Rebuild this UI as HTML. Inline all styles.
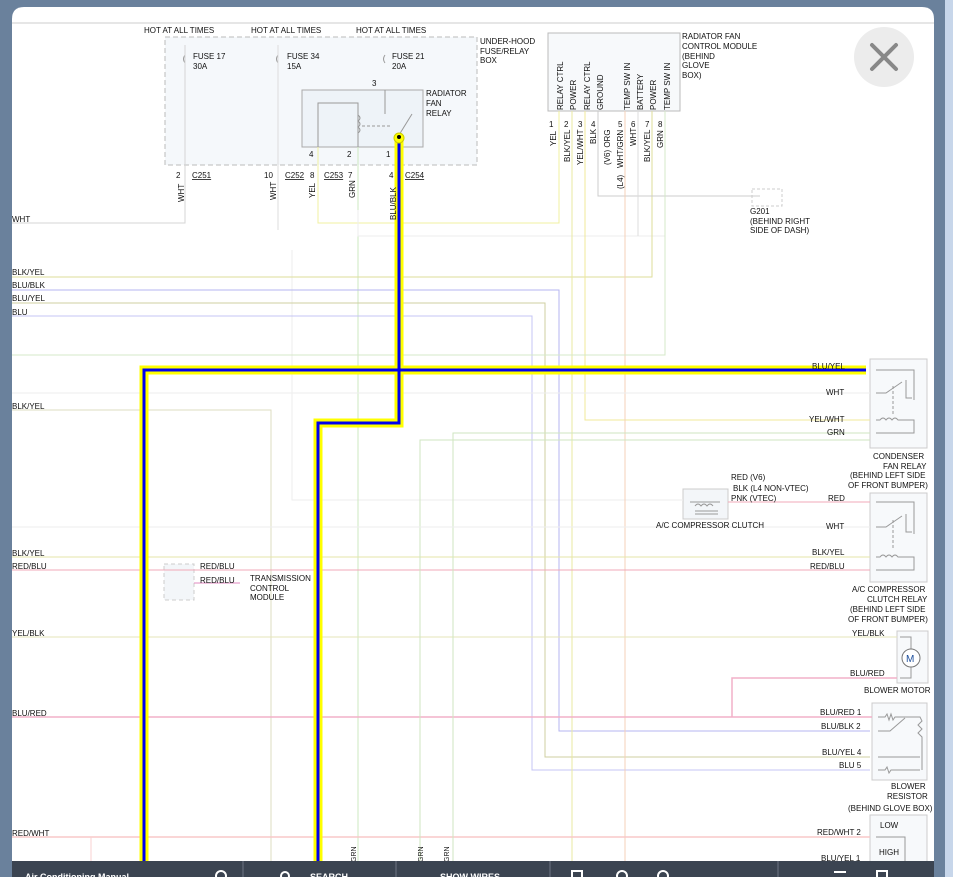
<!DOCTYPE html>
<html><head><meta charset="utf-8"><style>
html,body{margin:0;padding:0;width:953px;height:877px;overflow:hidden;background:#6a819c;}
svg{display:block;font-family:"Liberation Sans",sans-serif;}
</style></head><body>
<svg width="953" height="877" viewBox="0 0 953 877" xmlns="http://www.w3.org/2000/svg">
<rect x="0" y="0" width="953" height="877" fill="#6a819c"/>
<rect x="945" y="0" width="8" height="877" fill="#c7d6ea"/>
<path d="M12 877 V19 Q12 7 24 7 H922 Q934 7 934 19 V877 Z" fill="#fff"/>
<line x1="12" y1="23" x2="934" y2="23" stroke="#ccc" stroke-width="1"/>

<!-- boxes -->
<rect x="165" y="37" width="312" height="128" fill="#f5f8fb" stroke="#bbb" stroke-dasharray="5,3"/>
<rect x="302" y="90" width="121" height="57" fill="#eef3f8" stroke="#aaa"/>
<rect x="548" y="33" width="132" height="78" fill="#f7f9fb" stroke="#bbb"/>
<rect x="870" y="359" width="57" height="89" fill="#f7f9fb" stroke="#ccc"/>
<rect x="870" y="493" width="57" height="89" fill="#f7f9fb" stroke="#ccc"/>
<rect x="897" y="631" width="31" height="52" fill="#f7f9fb" stroke="#ccc"/>
<rect x="872" y="703" width="55" height="77" fill="#f7f9fb" stroke="#ccc"/>
<rect x="870" y="815" width="57" height="50" fill="#f7f9fb" stroke="#ccc"/>
<rect x="683" y="489" width="45" height="30" fill="#f3f6f9" stroke="#ccc"/>
<rect x="164" y="564" width="30" height="36" fill="#f3f6f9" stroke="#ccc" stroke-dasharray="4,3"/>
<rect x="752" y="189" width="30" height="17" fill="none" stroke="#ccc" stroke-dasharray="3,2"/>

<!-- component internals -->
<g fill="none" stroke="#999" stroke-width="1">
<path d="M318 147 V103 H358 V147"/>
<path d="M358 115 q4 3 0 6 q4 3 0 6 q4 3 0 6"/>
<path d="M362 126 H390" stroke-dasharray="3,2"/>
<path d="M385 90 V114"/><path d="M399 135 L412 114"/>
<path d="M185 55 q-3 4 0 8 M278 55 q-3 4 0 8 M385 55 q-3 4 0 8"/>
<path d="M876 393 H886 L902 382 M906 380 V398 H912" /><path d="M893 386 V414" stroke-dasharray="3,2"/>
<path d="M876 370 H914 V400 M876 420 H880 q3 -4 6 0 q3 -4 6 0 q3 -4 6 0 H914 V433 H876"/>
<path d="M876 527 H886 L902 516 M906 514 V532 H912"/><path d="M893 520 V548" stroke-dasharray="3,2"/>
<path d="M876 502 H914 V534 M876 557 H880 q3 -4 6 0 q3 -4 6 0 q3 -4 6 0 H914 V570 H876"/>
<path d="M900 637 H911 V649 M911 667 V678 H900"/>
<path d="M878 717 H885 l2 -3 l2 6 l2 -6 l2 6 l2 -3 H920 l2 4 l-4 4 l4 4 l-4 4 l4 4 V770 M878 731 H890 L905 718 M878 757 H920 M878 770 H885 l2 -3 l2 6 l2 -3 H920"/>
<path d="M876 837 H905 V862"/>
<path d="M690 502 H720 M695 506 q3 -4 6 0 q3 -4 6 0 q3 -4 6 0 M695 511 H718 M695 514 H718"/>
</g>
<circle cx="911" cy="658" r="9" fill="#fff" stroke="#777"/><text x="906" y="662" font-size="10" fill="#1a4c9a" font-family="Liberation Sans">M</text>

<!-- thin wires -->
<g fill="none" stroke-width="1">
<path d="M185 45 V223 H12" stroke="#d5d5d5"/>
<path d="M278 45 V230" stroke="#ddd"/>
<path d="M292 250 V500 H683" stroke="#eee"/>
<path d="M318 147 V223 H559 V111" stroke="#f0f0a0"/>
<path d="M358 147 V862" stroke="#cde8c0"/>
<path d="M358 210 V236 H665 V111" stroke="#eee"/>
<path d="M12 277 H652 V111" stroke="#dede9a"/>
<path d="M12 290 H559 V731 H870" stroke="#b6b6f0"/>
<path d="M12 303 H545 V757 H870" stroke="#cfcfa0"/>
<path d="M12 316 H532 V770 H870" stroke="#c4c4f4"/>
<path d="M572 111 V862" stroke="#eaeaa0"/>
<path d="M585 111 V420 H870" stroke="#f0e89a"/>
<path d="M598 111 V196 H760" stroke="#ccc"/>
<path d="M625 111 V862" stroke="#f5d0b8"/>
<path d="M638 111 V236" stroke="#ddd"/>
<path d="M665 111 V355 H12" stroke="#d5e8c8"/>
<path d="M12 410 H271 V862" stroke="#dedcc0"/>
<path d="M12 557 H870" stroke="#e6e6a8"/>
<path d="M12 570 H870" stroke="#f0a8b8"/>
<path d="M194 583 H240" stroke="#e08ac0"/>
<path d="M12 637 H897" stroke="#e6e6b8"/>
<path d="M12 717 H872 M732 717 V678 H897" stroke="#f2b0c8" stroke-width="1.5"/>
<path d="M12 837 H870" stroke="#f8c8c8" stroke-width="1.5"/>
<path d="M91 837 V862" stroke="#f8d0d0"/>
<path d="M420 862 V440 H870" stroke="#cfe6c0"/>
<path d="M453 862 V433 H870" stroke="#cfe6c0"/>
<path d="M12 393 H870" stroke="#eee"/>
<path d="M12 527 H870" stroke="#eee"/>
<path d="M728 502 H870" stroke="#f2aab8"/>
</g>
<!-- highlighted wire -->
<g fill="none" stroke-linejoin="miter">
<path d="M399 140 V423 H318 V862" stroke="#ffff00" stroke-width="9"/>
<path d="M144 862 V370 H866" stroke="#ffff00" stroke-width="9"/>
<path d="M399 140 V423 H318 V862" stroke="#0000ee" stroke-width="3"/>
<path d="M144 862 V370 H866" stroke="#0000ee" stroke-width="3"/>
</g>
<circle cx="399" cy="138" r="5" fill="#ffff00" stroke="#cc0" stroke-width="1"/><circle cx="399" cy="137" r="2" fill="#000"/>

<g font-size="8" fill="#111">
<text x="144" y="33">HOT AT ALL TIMES</text>
<text x="251" y="33">HOT AT ALL TIMES</text>
<text x="356" y="33">HOT AT ALL TIMES</text>
<text x="480" y="44">UNDER-HOOD</text><text x="480" y="54">FUSE/RELAY</text><text x="480" y="63">BOX</text>
<text x="682" y="39">RADIATOR FAN</text><text x="682" y="49">CONTROL MODULE</text><text x="682" y="59">(BEHIND</text><text x="682" y="68">GLOVE</text><text x="682" y="78">BOX)</text>
<text x="193" y="59">FUSE 17</text><text x="193" y="69">30A</text>
<text x="287" y="59">FUSE 34</text><text x="287" y="69">15A</text>
<text x="392" y="59">FUSE 21</text><text x="392" y="69">20A</text>
<text x="426" y="96">RADIATOR</text><text x="426" y="106">FAN</text><text x="426" y="116">RELAY</text>
<text x="372" y="86">3</text>
<text x="309" y="157">4</text><text x="347" y="157">2</text><text x="386" y="157">1</text>
<text x="176" y="178">2</text><text x="192" y="178" text-decoration="underline">C251</text>
<text x="264" y="178">10</text><text x="285" y="178" text-decoration="underline">C252</text>
<text x="310" y="178">8</text><text x="324" y="178" text-decoration="underline">C253</text>
<text x="348" y="178">7</text>
<text x="389" y="178">4</text><text x="405" y="178" text-decoration="underline">C254</text>
<text x="750" y="214">G201</text><text x="750" y="224">(BEHIND RIGHT</text><text x="750" y="233">SIDE OF DASH)</text>
<text x="12" y="222">WHT</text>
<text x="12" y="275">BLK/YEL</text><text x="12" y="288">BLU/BLK</text><text x="12" y="301">BLU/YEL</text><text x="12" y="315">BLU</text>
<text x="12" y="409">BLK/YEL</text>
<text x="12" y="556">BLK/YEL</text><text x="12" y="569">RED/BLU</text>
<text x="12" y="636">YEL/BLK</text>
<text x="12" y="716">BLU/RED</text>
<text x="12" y="836">RED/WHT</text>
<text x="200" y="569">RED/BLU</text><text x="200" y="583">RED/BLU</text>
<text x="250" y="581">TRANSMISSION</text><text x="250" y="591">CONTROL</text><text x="250" y="600">MODULE</text>
<text x="812" y="369">BLU/YEL</text>
<text x="826" y="395">WHT</text>
<text x="809" y="422">YEL/WHT</text>
<text x="827" y="435">GRN</text>
<text x="873" y="459">CONDENSER</text><text x="883" y="469">FAN RELAY</text><text x="850" y="478">(BEHIND LEFT SIDE</text><text x="848" y="488">OF FRONT BUMPER)</text>
<text x="731" y="480">RED  (V6)</text><text x="733" y="491">BLK  (L4 NON-VTEC)</text><text x="731" y="501">PNK  (VTEC)</text>
<text x="828" y="501">RED</text>
<text x="656" y="528">A/C COMPRESSOR CLUTCH</text>
<text x="826" y="529">WHT</text>
<text x="812" y="555">BLK/YEL</text><text x="810" y="569">RED/BLU</text>
<text x="852" y="592">A/C COMPRESSOR</text><text x="867" y="602">CLUTCH RELAY</text><text x="850" y="612">(BEHIND LEFT SIDE</text><text x="848" y="622">OF FRONT BUMPER)</text>
<text x="852" y="636">YEL/BLK</text>
<text x="850" y="676">BLU/RED</text>
<text x="864" y="693">BLOWER MOTOR</text>
<text x="820" y="715">BLU/RED  1</text><text x="821" y="729">BLU/BLK  2</text>
<text x="822" y="755">BLU/YEL  4</text><text x="839" y="768">BLU  5</text>
<text x="891" y="789">BLOWER</text><text x="887" y="799">RESISTOR</text><text x="848" y="811">(BEHIND GLOVE BOX)</text>
<text x="817" y="835">RED/WHT  2</text>
<text x="821" y="861">BLU/YEL  1</text>
<text x="880" y="828">LOW</text><text x="879" y="855">HIGH</text>
</g>
<g font-size="8" fill="#111">
<text transform="translate(184,202) rotate(-90)">WHT</text>
<text transform="translate(276,200) rotate(-90)">WHT</text>
<text transform="translate(315,198) rotate(-90)">YEL</text>
<text transform="translate(355,198) rotate(-90)">GRN</text>
<text transform="translate(396,220) rotate(-90)">BLU/BLK</text>
<text transform="translate(563,110) rotate(-90)">RELAY CTRL</text>
<text transform="translate(576,110) rotate(-90)">POWER</text>
<text transform="translate(590,110) rotate(-90)">RELAY CTRL</text>
<text transform="translate(603,110) rotate(-90)">GROUND</text>
<text transform="translate(630,110) rotate(-90)">TEMP SW IN</text>
<text transform="translate(643,110) rotate(-90)">BATTERY</text>
<text transform="translate(656,110) rotate(-90)">POWER</text>
<text transform="translate(670,110) rotate(-90)">TEMP SW IN</text>
<text x="549" y="127">1</text><text x="564" y="127">2</text><text x="578" y="127">3</text><text x="591" y="127">4</text>
<text x="618" y="127">5</text><text x="631" y="127">6</text><text x="645" y="127">7</text><text x="658" y="127">8</text>
<text transform="translate(556,146) rotate(-90)">YEL</text>
<text transform="translate(570,162) rotate(-90)">BLK/YEL</text>
<text transform="translate(583,165) rotate(-90)">YEL/WHT</text>
<text transform="translate(596,144) rotate(-90)">BLK</text>
<text transform="translate(610,165) rotate(-90)">(V6) ORG</text>
<text transform="translate(623,168) rotate(-90)">WHT/GRN</text>
<text transform="translate(623,189) rotate(-90)">(L4)</text>
<text transform="translate(636,146) rotate(-90)">WHT</text>
<text transform="translate(650,162) rotate(-90)">BLK/YEL</text>
<text transform="translate(663,148) rotate(-90)">GRN</text>
<text transform="translate(356,862) rotate(-90)" font-size="7">GRN</text>
<text transform="translate(423,862) rotate(-90)" font-size="7">GRN</text>
<text transform="translate(449,862) rotate(-90)" font-size="7">GRN</text>
</g>

<!-- close button -->
<circle cx="884" cy="57" r="30" fill="#ececec"/>
<path d="M872 45 L896 69 M896 45 L872 69" stroke="#888" stroke-width="4" stroke-linecap="round"/>

<!-- toolbar -->
<rect x="12" y="861" width="922" height="16" fill="#3b4451"/>
<g stroke="#5c6572" stroke-width="1.5"><line x1="243" y1="861" x2="243" y2="877"/><line x1="396" y1="861" x2="396" y2="877"/><line x1="550" y1="861" x2="550" y2="877"/><line x1="778" y1="861" x2="778" y2="877"/></g>
<g fill="#fff" font-size="9" font-weight="bold"><text x="25" y="880">Air Conditioning Manual</text><text x="310" y="880">SEARCH</text><text x="440" y="880">SHOW WIRES</text></g>
<g fill="none" stroke="#fff" stroke-width="2"><circle cx="221" cy="876" r="5"/><circle cx="285" cy="876" r="4"/><circle cx="622" cy="876" r="5"/><circle cx="663" cy="876" r="5"/><rect x="572" y="871" width="10" height="8"/><rect x="877" y="871" width="10" height="8"/><line x1="834" y1="872" x2="846" y2="872"/></g>
</svg>
</body></html>
